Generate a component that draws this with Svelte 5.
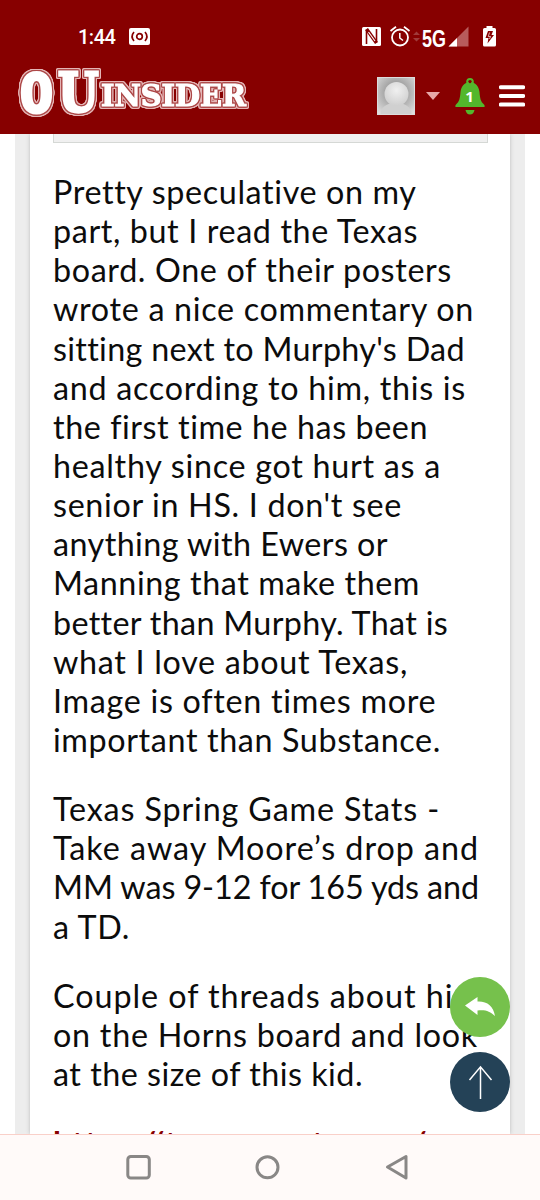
<script>
  // every line keeps its own width, the letter spacing is spread to fit
  const paragraphs = [
    [
      { text: "Pretty speculative on my", width: 363 },
      { text: "part, but I read the Texas", width: 365 },
      { text: "board. One of their posters", width: 399 },
      { text: "wrote a nice commentary on", width: 421 },
      { text: "sitting next to Murphy's Dad", width: 411 },
      { text: "and according to him, this is", width: 413 },
      { text: "the first time he has been", width: 375 },
      { text: "healthy since got hurt as a", width: 388 },
      { text: "senior in HS. I don't see", width: 349 },
      { text: "anything with Ewers or", width: 335 },
      { text: "Manning that make them", width: 367 },
      { text: "better than Murphy. That is", width: 394 },
      { text: "what I love about Texas,", width: 355 },
      { text: "Image is often times more", width: 383 },
      { text: "important than Substance.", width: 388 },
    ],
    [
      { text: "Texas Spring Game Stats -", width: 387 },
      { text: "Take away Moore’s drop and", width: 426 },
      { text: "MM was 9-12 for 165 yds and", width: 426 },
      { text: "a TD.", width: 77 },
    ],
    [
      { text: "Couple of threads about him", width: 428 },
      { text: "on the Horns board and look", width: 425 },
      { text: "at the size of this kid.", width: 310 },
    ],
  ];
  const link = { text: "https://texassports.com/", width: 373 };

  function fit(node, width) {
    const natural = node.getBoundingClientRect().width;
    node.style.letterSpacing = (width - natural) / node.textContent.length + "px";
  }
</script>

<div class="screen">
  <header>
    <div class="status">
      <span class="clock">1:44</span>
      <svg class="cast" width="21" height="17" viewBox="0 0 21 17">
        <rect width="21" height="17" rx="2" fill="#fff" />
        <g fill="none" stroke="#870000" stroke-width="1.7">
          <circle cx="10.5" cy="8.5" r="2.8" />
          <path d="M5 4Q1.2 8.5 5 13M16 4Q19.8 8.5 16 13" />
        </g>
      </svg>
      <svg class="phone-icons" width="138" height="24" viewBox="0 0 138 24">
        <rect x="0" y="3" width="19" height="19" rx="1.5" fill="#fff" />
        <path d="M4.5 20V6M14.5 18.5V5" fill="none" stroke="#870000" stroke-width="1.6" />
        <path d="M4.5 5L14.5 19" stroke="#870000" stroke-width="3.6" />
        <path d="M6.5 8L13 17" stroke="#fff" stroke-width="1.1" />
        <g fill="none" stroke="#fff" stroke-width="1.8">
          <circle cx="38" cy="13.5" r="8" />
          <path d="M28.5 7L34 2.8M42 2.8L47.5 7" />
          <path d="M37.8 9V14L41 16.5" stroke-width="1.5" />
        </g>
        <path d="M51 11L54.5 7.5L58 11ZM51 14L54.5 17.5L58 14Z" fill="#a03a3a" />
        <text x="60" y="22.5" class="net" textLength="24" lengthAdjust="spacingAndGlyphs">5G</text>
        <path d="M86.5 22.5L106.5 2.5V22.5Z" fill="#b85c5c" />
        <path d="M86.5 22.5L95 14V22.5Z" fill="#fff" />
        <path d="M121 5.5Q121 4 122.5 4H124.5V2H130.5V4H132.5Q134 4 134 5.5V21Q134 22.5 132.5 22.5H122.5Q121 22.5 121 21Z" fill="#fff" />
        <path d="M126 7H131L129.5 11H132L125.5 19.5L126.5 14H123.5Z" fill="#870000" />
        <path d="M127.5 8.5L126.3 12.5H128.5L127.5 15" fill="none" stroke="#fff" stroke-width=".7" />
      </svg>
    </div>

    <div class="bar">
      <svg class="logo" width="234" height="54" viewBox="0 0 234 54">
        <text x="3" y="46" class="big" textLength="33" lengthAdjust="spacingAndGlyphs">O</text>
        <text x="41" y="46" class="slab" textLength="40.5" lengthAdjust="spacingAndGlyphs">U</text>
        <text x="84" y="40" class="slab small" textLength="145" lengthAdjust="spacingAndGlyphs">INSIDER</text>
      </svg>
      <div class="tools">
        <svg width="38" height="38" viewBox="0 0 38 38">
          <defs>
            <radialGradient id="back" cx=".5" cy=".4" r=".7">
              <stop offset=".4" stop-color="#a5a5a5" />
              <stop offset="1" stop-color="#dedede" />
            </radialGradient>
            <radialGradient id="head" cx=".5" cy=".35" r=".65">
              <stop offset="0" stop-color="#f0f0f0" />
              <stop offset="1" stop-color="#cfcfcf" />
            </radialGradient>
          </defs>
          <rect width="38" height="38" fill="url(#back)" />
          <ellipse cx="19" cy="37" rx="15.5" ry="11.5" fill="#d0d0d0" />
          <circle cx="19.5" cy="17" r="12" fill="url(#head)" />
          <rect x=".5" y=".5" width="37" height="37" fill="none" stroke="#dcdcdc" />
        </svg>
        <svg class="caret" width="14" height="8" viewBox="0 0 14 8">
          <path d="M0 0H14L7 8Z" fill="#e7a9a9" />
        </svg>
        <svg class="bell" width="30" height="37" viewBox="0 0 30 37">
          <circle cx="15" cy="3.8" r="2.8" fill="none" stroke="#53b72c" stroke-width="2" />
          <path d="M15 4C21 4.5 24 9 24.5 14C25 20 25.5 23.5 29 26.5Q30.5 28.5 29 29H1Q-.5 28.5 1 26.5C4.5 23.5 5 20 5.5 14C6 9 9 4.5 15 4Z" fill="#53b72c" />
          <circle cx="15" cy="4" r="1.2" fill="#870000" />
          <path d="M10.5 32H19.5Q18.5 36.5 15 36.5T10.5 32Z" fill="#53b72c" />
          <text x="14.5" y="23.5" text-anchor="middle" class="count">1</text>
        </svg>
        <svg width="26" height="22" viewBox="0 0 26 22">
          <path d="M1.8 2.2H24.2M1.8 10.9H24.2M1.8 19.6H24.2" stroke="#fff" stroke-width="4" stroke-linecap="round" />
        </svg>
      </div>
    </div>
  </header>

  <main>
    <div class="gutter">
      <article>
        <div class="quote"></div>
        {#each paragraphs as lines}
          <p>
            {#each lines as line}
              <span class="line"><span use:fit={line.width}>{line.text}</span></span>
            {/each}
          </p>
        {/each}
        <p class="link"><span class="line"><span use:fit={link.width}>{link.text}</span></span></p>
      </article>
    </div>
    <div class="floating">
      <svg width="60" height="60" viewBox="0 0 60 60">
        <circle cx="30" cy="30" r="30" fill="#76c14c" />
        <path d="M15 28.5L27.5 20V24.5C37 24 43.5 29 45 39C40 34 35 32.5 27.5 33.5V38Z" fill="#fff" />
      </svg>
      <svg width="60" height="60" viewBox="0 0 60 60">
        <circle cx="30" cy="30" r="30" fill="#244257" />
        <path d="M30.5 47V15M19.5 28L30.5 14.8L41.5 28" fill="none" stroke="#fff" stroke-width="1.5" />
      </svg>
    </div>
  </main>

  <nav>
    <svg width="540" height="65" viewBox="0 0 540 65">
      <g fill="none" stroke="#898786" stroke-width="3" stroke-linejoin="round">
        <rect x="127.8" y="21.5" width="21.5" height="21.5" rx="3" />
        <circle cx="267.5" cy="32.3" r="10.5" />
        <path d="M387.5 32L406 21.5V43Z" />
      </g>
    </svg>
  </nav>
</div>

<style>
  :global(body) {
    margin: 0;
    background: #fff;
  }

  .screen {
    display: flex;
    flex-direction: column;
    width: 540px;
    height: 1200px;
    overflow: hidden;
    font-family: Lato, "Liberation Sans", sans-serif;
  }

  header {
    flex: none;
    height: 134px;
    background: #870000;
  }

  .status {
    display: flex;
    height: 64px;
    box-sizing: border-box;
    padding: 24px 0 0 78px;
    align-items: flex-start;
  }

  .clock {
    width: 51px;
    font: 500 20px/26px Roboto, sans-serif;
    color: #fff;
    letter-spacing: -0.5px;
  }

  .cast {
    margin-top: 4px;
  }

  .phone-icons {
    margin-left: 212px;
    overflow: visible;
  }

  .net {
    font: bold 23px "Liberation Sans", sans-serif;
    fill: #fff;
  }

  .bar {
    display: flex;
    justify-content: space-between;
    padding: 2px 15px 0 17px;
  }

  /* white letters with a red ring and a pink edge around it */
  .logo {
    overflow: visible;
    fill: #fff;
    stroke: #fff;
    stroke-width: 3.2px;
    filter: drop-shadow(1px 0 #ad4848) drop-shadow(-1px 0 #ad4848)
      drop-shadow(0 1px #ad4848) drop-shadow(0 -1px #ad4848)
      drop-shadow(1px 0 #e3b5b5) drop-shadow(-1px 0 #e3b5b5)
      drop-shadow(0 1px #e3b5b5) drop-shadow(0 -1px #e3b5b5);
  }

  .big {
    font: bold 54px "DejaVu Sans Mono", monospace;
  }

  .slab {
    font: bold 55px "DejaVu Serif", serif;
  }

  .small {
    font-size: 30px;
    stroke-width: 1.2px;
  }

  .tools {
    display: flex;
    align-items: center;
    height: 60px;
  }

  .caret {
    margin: 0 15px 0 11px;
  }

  .bell {
    margin-right: 14px;
  }

  .count {
    font: bold 15px "Open Sans", sans-serif;
    fill: #fff;
  }

  main {
    position: relative;
    flex: none;
    height: 1000px;
    overflow: hidden;
  }

  .gutter {
    margin: 0 15px;
    padding: 0 15px;
    background: #ededed;
  }

  article {
    height: 1000px;
    padding: 0 23px;
    background: #fff;
    box-shadow: 0 0 4px #bbb;
  }

  .quote {
    width: 433px;
    height: 8px;
    margin-bottom: 29px;
    background: #f0f0f0;
    border: 1px solid #d5d8d5;
    border-top: 0;
  }

  p {
    margin: 0 0 30px;
    font-size: 32.3px;
    line-height: 39.15px;
    color: #0c0c0c;
  }

  .line {
    display: block;
    height: 39.15px;
    white-space: nowrap;
  }

  .link {
    font-weight: bold;
    color: #870000;
  }

  .floating {
    position: absolute;
    right: 30px;
    bottom: 22px;
    display: grid;
    gap: 15px;
  }

  nav {
    flex: none;
    height: 65px;
    border-top: 1px solid #f9d0c9;
    background: #fffaf9;
  }
</style>
